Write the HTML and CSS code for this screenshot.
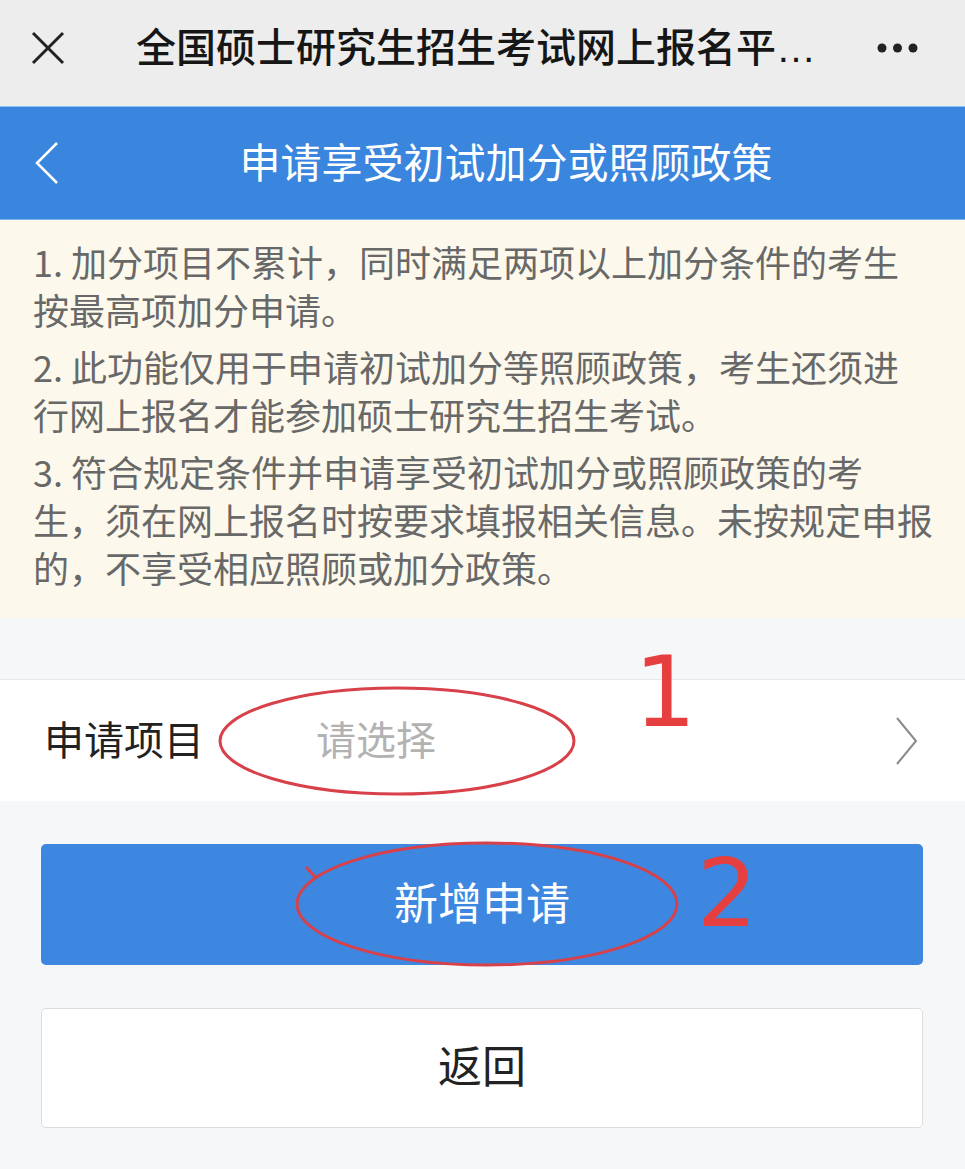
FILE: index.html
```html
<!DOCTYPE html>
<html lang="zh-CN">
<head>
<meta charset="utf-8">
<title>申请享受初试加分或照顾政策</title>
<link rel="stylesheet" href="styles.css">
</head>
<body>
  <header class="topbar">
    <svg class="close-icon" width="34" height="34" viewBox="0 0 34 34" aria-hidden="true">
      <path d="M2 2L32 32M32 2L2 32" stroke="#222" stroke-width="3" fill="none"/>
    </svg>
    <div class="topbar-title">全国硕士研究生招生考试网上报名平…</div>
    <svg class="more-icon" width="41" height="10" viewBox="0 0 41 10" aria-hidden="true">
      <circle cx="5" cy="5" r="4.5" fill="#222"/>
      <circle cx="20.5" cy="5" r="4.5" fill="#222"/>
      <circle cx="36" cy="5" r="4.5" fill="#222"/>
    </svg>
  </header>

  <nav class="pagebar">
    <svg class="back-icon" width="24" height="42" viewBox="0 0 24 42" aria-hidden="true">
      <polyline points="22,1 2,21 22,41" stroke="#fff" stroke-width="2.5" fill="none"/>
    </svg>
    <h1 class="pagebar-title">申请享受初试加分或照顾政策</h1>
  </nav>

  <section class="notice">
    <p>1. 加分项目不累计，同时满足两项以上加分条件的考生按最高项加分申请。</p>
    <p>2. 此功能仅用于申请初试加分等照顾政策，考生还须进行网上报名才能参加硕士研究生招生考试。</p>
    <p>3. 符合规定条件并申请享受初试加分或照顾政策的考生，须在网上报名时按要求填报相关信息。未按规定申报的，不享受相应照顾或加分政策。</p>
  </section>

  <main class="form">
    <div class="field-row">
      <span class="field-label">申请项目</span>
      <span class="field-value">请选择</span>
      <svg class="chevron" width="22" height="48" viewBox="0 0 22 48" aria-hidden="true">
        <polyline points="1,1 20,24 1,47" stroke="#8a8a8a" stroke-width="2" fill="none"/>
      </svg>
    </div>
    <div class="btn btn-primary">新增申请</div>
    <div class="btn btn-default">返回</div>

    <svg class="marks" aria-hidden="true">
      <ellipse cx="397" cy="62" rx="177" ry="53" fill="none" stroke="#d8404a" stroke-width="3"/>
      <text class="mark-num" x="634" y="47">1</text>
      <ellipse cx="487" cy="225" rx="190" ry="61" fill="none" stroke="#d8404a" stroke-width="3"/>
      <path d="M306 188 L316 199" stroke="#d8404a" stroke-width="3" fill="none"/>
      <text class="mark-num mark-num-2" x="697" y="247">2</text>
    </svg>
  </main>
</body>
</html>
```

FILE: styles.css
```css
* {
  box-sizing: border-box;
}

html, body {
  margin: 0;
  padding: 0;
}

body {
  width: 965px;
  min-height: 1169px;
  background: #f6f7f9;
  font-family: "Noto Sans CJK SC", "Noto Sans", sans-serif;
}

/* WeChat top bar */
.topbar {
  height: 106px;
  background: #ededed;
  display: flex;
  align-items: center;
  padding: 0 47px 10px 31px;
}

.close-icon {
  flex: none;
  display: block;
}

.topbar-title {
  flex: 1;
  margin-left: 71px;
  font-family: "Liberation Sans", "Noto Sans CJK SC", sans-serif;
  font-size: 40px;
  font-weight: 500;
  color: #161616;
  white-space: nowrap;
  line-height: 1.2;
}

.more-icon {
  flex: none;
  display: block;
}

/* blue page header */
.pagebar {
  height: 114px;
  background: #3a85de;
  border-top: 1px solid #8cc3f3;
  border-bottom: 1px solid #7cb6ee;
  display: flex;
  align-items: center;
  padding: 0 12px 4px 35px;
}

.back-icon {
  flex: none;
  display: block;
  margin-top: 4px;
}

.pagebar-title {
  flex: 1;
  margin: 0;
  text-align: center;
  font-size: 41px;
  font-weight: 400;
  color: #ffffff;
  line-height: 1.2;
}

/* notice box */
.notice {
  background: #fcf9ec;
  padding: 17px 31px 27px 33px;
  color: #686868;
  font-size: 36px;
  line-height: 48px;
}

.notice p {
  margin: 0 0 9px;
}

.notice p:last-child {
  margin-bottom: 0;
}

/* form */
.form {
  position: relative;
  margin-top: 61px;
}

.field-row {
  height: 122px;
  background: #ffffff;
  border-top: 1px solid #e6e7ea;
  display: flex;
  align-items: center;
  padding: 0 47px 6px 44px;
}

.field-label {
  width: 272px;
  flex: none;
  font-size: 40px;
  color: #222;
}

.field-value {
  flex: 1;
  font-size: 40px;
  color: #b2b2b2;
}

.chevron {
  flex: none;
  display: block;
  margin-top: 6px;
}

.btn {
  margin: 43px 42px 0 41px;
  height: 121px;
  border-radius: 5px;
  display: flex;
  align-items: center;
  justify-content: center;
  font-size: 44px;
  padding-bottom: 8px;
}

.btn-primary {
  background: #3d87e0;
  color: #ffffff;
}

.btn-default {
  height: 120px;
  background: #ffffff;
  border: 1px solid #dcdde0;
  color: #222;
}

/* red hand-drawn annotations over the form */
.marks {
  position: absolute;
  left: 0;
  top: 0;
  width: 100%;
  height: 100%;
  overflow: visible;
  pointer-events: none;
}

.mark-num {
  font-family: "DejaVu Sans", sans-serif;
  font-size: 98px;
  fill: #e63f3f;
}

.mark-num-2 {
  font-size: 95px;
}
```
